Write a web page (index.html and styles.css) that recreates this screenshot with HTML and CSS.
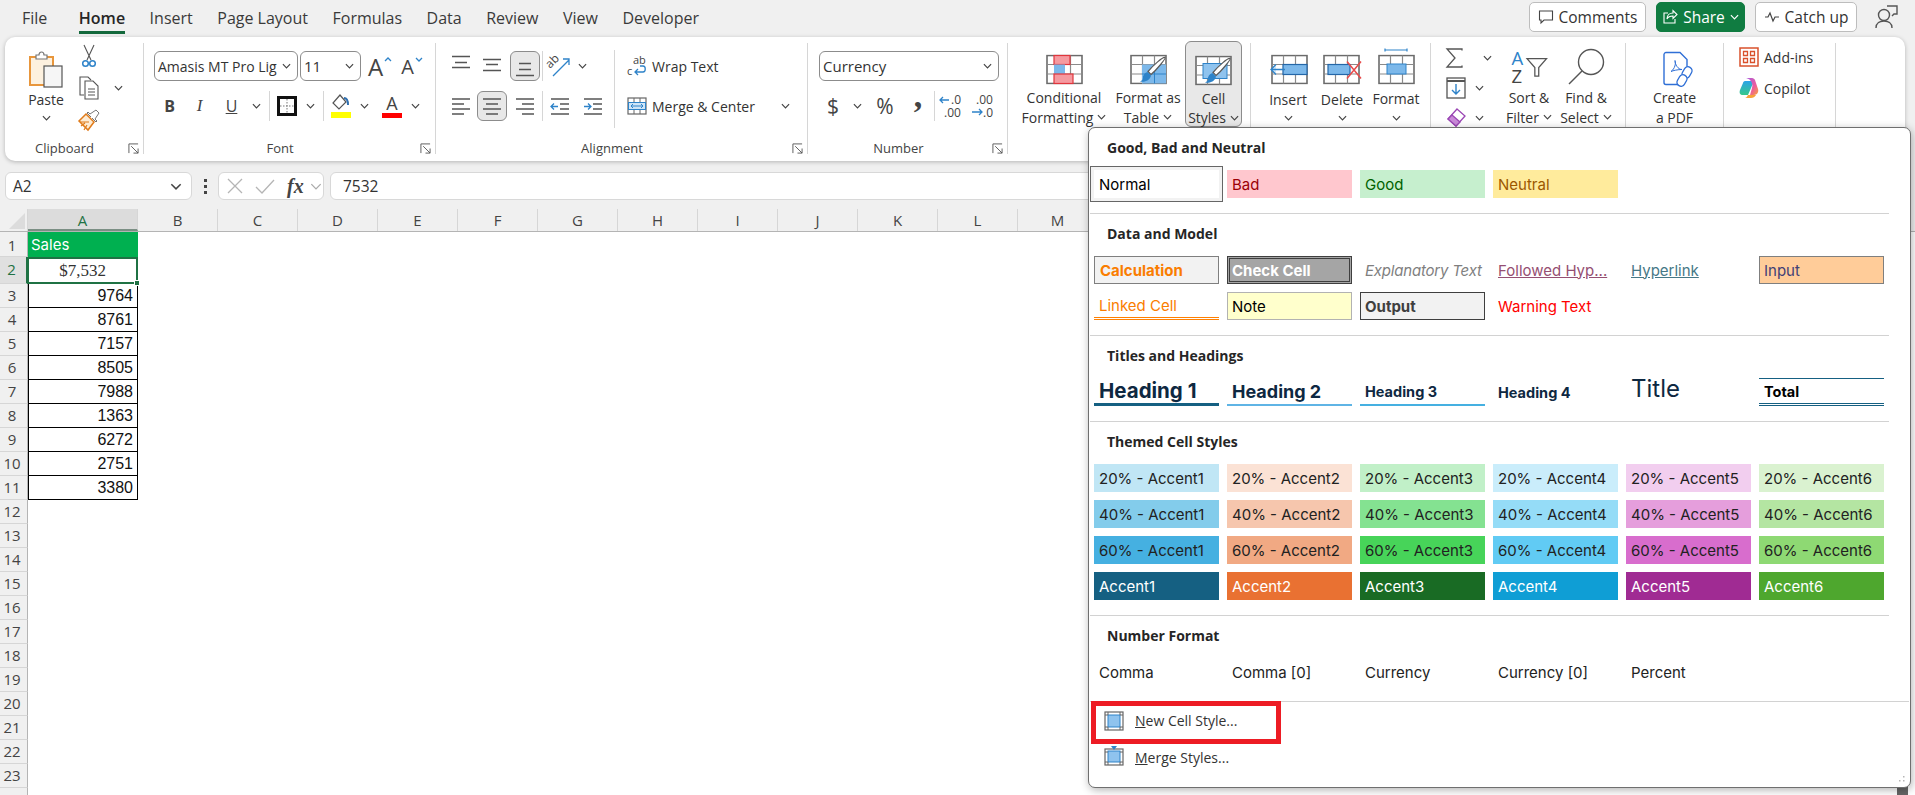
FILE: index.html
```html
<!DOCTYPE html>
<html lang="en">
<head>
    <meta charset="UTF-8">
    <title>Cell Styles</title>
    <link rel="stylesheet" href="styles.css">
</head>
<body>
    <!-- shared icon parts -->
    <svg class="defs" width="0" height="0">
        <defs>
            <symbol id="chev" viewBox="0 0 10 6"><path d="M1 1l4 4 4-4" fill="none" stroke="#444" stroke-width="1.3"/></symbol>
            <symbol id="launch" viewBox="0 0 12 12"><path d="M1 11V1h10M3.5 3.5l7.5 7.5M11 6v5H6" fill="none" stroke="#555" stroke-width="1"/></symbol>
            <symbol id="vtop" viewBox="0 0 20 22"><path d="M1 1.5h18M4 7.5h12M1 12.5h18" stroke="#555" stroke-width="1.4"/></symbol>
            <symbol id="vmid" viewBox="0 0 20 22"><path d="M1 4.5h18M4 9.5h12M1 15.5h18" stroke="#555" stroke-width="1.4"/></symbol>
            <symbol id="vbot" viewBox="0 0 20 22"><path d="M4 8.5h12M4 14.5h12M1 20.5h18" stroke="#555" stroke-width="1.4"/></symbol>
            <symbol id="hleft" viewBox="0 0 20 18"><path d="M1 2h18M1 7h12M1 12h18M1 17h12" stroke="#555" stroke-width="1.4"/></symbol>
            <symbol id="hmid" viewBox="0 0 20 18"><path d="M1 2h18M4 7h12M1 12h18M4 17h12" stroke="#555" stroke-width="1.4"/></symbol>
            <symbol id="hright" viewBox="0 0 20 18"><path d="M1 2h18M7 7h12M1 12h18M7 17h12" stroke="#555" stroke-width="1.4"/></symbol>
            <symbol id="table" viewBox="0 0 37 30">
                <rect x="1" y="1" width="35" height="28" fill="#fff" stroke="#6b6b6b" stroke-width="1.6"/>
                <path d="M12.5 1v28M24.5 1v28M1 10h35M1 19.5h35" stroke="#8a8a8a" stroke-width="1.2"/>
            </symbol>
            <symbol id="brush" viewBox="0 0 37 30">
                <path d="M35 3c1 1-8 12-14 17l-3-3c5-6 15-15 17-14z" fill="#fff" stroke="#5a5a5a" stroke-width="1.2"/>
                <path d="M17.500 17.500l3.500 3.500c-1 5-6 7-11 6 3-1 3-3 3-5 1-3 3-4 4.500-4.500z" fill="#2e83c9"/>
            </symbol>
        </defs>
    </svg>

    <!-- Tabs and top right buttons -->
    <div class="topbar">
        <nav class="tabs">
            <span class="tab tab-file">File</span>
            <span class="tab active">Home</span>
            <span class="tab">Insert</span>
            <span class="tab">Page Layout</span>
            <span class="tab">Formulas</span>
            <span class="tab">Data</span>
            <span class="tab">Review</span>
            <span class="tab">View</span>
            <span class="tab">Developer</span>
        </nav>
        <div class="top-actions">
            <button class="top-btn comments">
                <svg width="16" height="16" viewBox="0 0 16 16"><path d="M1.500 2h13v9H6l-3 3v-3H1.500z" fill="none" stroke="#444" stroke-width="1.100"/></svg>
                Comments
            </button>
            <button class="top-btn share">
                <svg width="16" height="16" viewBox="0 0 16 16"><path d="M6 4H2v10h11v-4M5 10c0-4 3-6 6-6V1.500l4 4-4 4V7c-3 0-5 1-6 3z" fill="none" stroke="#fff" stroke-width="1.100"/></svg>
                Share
                <svg class="chev chev-white" viewBox="0 0 10 6"><path d="M1 1l4 4 4-4" fill="none" stroke="#fff" stroke-width="1.300"/></svg>
            </button>
            <button class="top-btn catchup">
                <svg width="16" height="14" viewBox="0 0 16 14"><path d="M1 7h3l2-4 3 8 2-4h4" fill="none" stroke="#444" stroke-width="1.200"/></svg>
                Catch up
            </button>
            <svg class="person" width="24" height="26" viewBox="0 0 24 26">
                <circle cx="9" cy="11" r="5.500" fill="none" stroke="#555" stroke-width="1.400"/>
                <path d="M1 24c0-5 4-7 8-7s8 2 8 7M12 2h10v8h-3l-2 2" fill="none" stroke="#555" stroke-width="1.400"/>
            </svg>
        </div>
    </div>

    <!-- Ribbon -->
    <div class="ribbon">
        <section class="group g-clipboard">
            <div class="group-body clipboard-body">
                <div class="big big-low paste-btn">
                    <svg class="big-icon" width="36" height="37" viewBox="0 0 36 37">
                        <rect x="2" y="6" width="23" height="28" fill="#fdf1df" stroke="#e8963c" stroke-width="2"/>
                        <path d="M8 8V4h3c0-4 5-4 5 0h3v4z" fill="#fff" stroke="#777" stroke-width="1.200"/>
                        <rect x="16" y="15" width="18" height="21" fill="#f6f6f6" stroke="#555" stroke-width="1.200"/>
                    </svg>
                    <span class="big-text">Paste</span>
                    <svg class="chev big-chev"><use href="#chev"/></svg>
                </div>
                <div class="clip-tools">
                    <div class="clip-row">
                        <svg width="16" height="24" viewBox="0 0 16 24"><path d="M3 1l7 15M13 1L6 16" stroke="#555" stroke-width="1.100"/><circle cx="4.500" cy="19.500" r="2.800" fill="none" stroke="#2e83c9" stroke-width="1.500"/><circle cx="11.500" cy="19.500" r="2.800" fill="none" stroke="#2e83c9" stroke-width="1.500"/></svg>
                    </div>
                    <div class="clip-row">
                        <svg width="20" height="24" viewBox="0 0 20 24"><path d="M5 19H1V1h8l3 3" fill="none" stroke="#555" stroke-width="1.100"/><path d="M6 5h8l5 5v13H6zM9 13h7M9 16h7M9 19h7" fill="#fff" stroke="#555" stroke-width="1.100"/></svg>
                        <svg class="chev"><use href="#chev"/></svg>
                    </div>
                    <div class="clip-row">
                        <svg width="22" height="22" viewBox="0 0 22 22"><path d="M13 8l-4-4 1-1 2 2 6-4 3 3-4 6 2 2-1 1-4-4" fill="#fff" stroke="#777" stroke-width="1"/><path d="M8 5l8 8-6 8-9-9z" fill="#fdebd3" stroke="#e07b1a" stroke-width="1.500"/><path d="M2 13l9 0M6 21l3-5M3 17l4-3" stroke="#e07b1a" stroke-width="1.200"/></svg>
                    </div>
                </div>
            </div>
            <div class="label-row"><span class="group-label">Clipboard</span><svg class="launcher"><use href="#launch"/></svg></div>
        </section>

        <section class="group g-font">
            <div class="group-body rows">
                <div class="row font-row1">
                    <div class="select select-font"><span>Amasis MT Pro Lig</span><svg class="chev"><use href="#chev"/></svg></div>
                    <span></span>
                    <div class="select"><span>11</span><svg class="chev"><use href="#chev"/></svg></div>
                    <span class="tool size-btn big-a">A<svg class="size-caret" width="8" height="5" viewBox="0 0 8 5"><path d="M1 4l3-3 3 3" fill="none" stroke="#2e83c9" stroke-width="1.300"/></svg></span>
                    <span class="tool size-btn small-a">A<svg class="size-caret" width="8" height="5" viewBox="0 0 8 5"><path d="M1 1l3 3 3-3" fill="none" stroke="#2e83c9" stroke-width="1.300"/></svg></span>
                </div>
                <div class="row font-row2">
                    <span class="tool style-b">B</span>
                    <span class="tool style-i">I</span>
                    <span class="tool style-u">U</span>
                    <span class="tool"><svg class="chev"><use href="#chev"/></svg></span>
                    <span class="tool"><i class="vsep"></i></span>
                    <span class="tool">
                        <svg width="20" height="20" viewBox="0 0 20 20"><rect x="1.500" y="1.500" width="17" height="17" fill="#fff" stroke="#111" stroke-width="3"/><path d="M10 3v14M3 10h14" stroke="#777" stroke-width="1" stroke-dasharray="1.500 1.500"/></svg>
                    </span>
                    <span class="tool"><svg class="chev"><use href="#chev"/></svg></span>
                    <span class="tool"><i class="vsep"></i></span>
                    <span class="tool">
                        <svg width="20" height="24" viewBox="0 0 20 24"><path d="M9 1L2 9l6 6 7-7z" fill="#fff" stroke="#555" stroke-width="1.200"/><path d="M13 4c3 0 4 3 4 7" fill="none" stroke="#2e6fb0" stroke-width="2"/><rect y="18" width="20" height="6" fill="#ffff00"/></svg>
                    </span>
                    <span class="tool"><svg class="chev"><use href="#chev"/></svg></span>
                    <span class="tool font-color">A<i class="color-bar"></i></span>
                    <span class="tool"><svg class="chev"><use href="#chev"/></svg></span>
                </div>
            </div>
            <div class="label-row"><span class="group-label">Font</span><svg class="launcher"><use href="#launch"/></svg></div>
        </section>

        <section class="group g-align">
            <div class="group-body align-body">
                <div class="rows align-left">
                    <div class="row align-row1">
                        <span class="tool"><svg class="al-v"><use href="#vtop"/></svg></span>
                        <span class="tool"><svg class="al-v"><use href="#vmid"/></svg></span>
                        <span class="tool"><span class="pressed"><svg class="al-v"><use href="#vbot"/></svg></span></span>
                        <span class="tool"><i class="vsep"></i></span>
                        <span class="tool">
                            <svg width="22" height="24" viewBox="0 0 22 24"><text class="orient" transform="translate(1 15) rotate(-45)">ab</text><path d="M4 22L20 6M14 5h6v6" fill="none" stroke="#2e83c9" stroke-width="1.300"/></svg>
                        </span>
                        <span class="tool"><svg class="chev"><use href="#chev"/></svg></span>
                    </div>
                    <div class="row align-row2">
                        <span class="tool"><svg class="al-h"><use href="#hleft"/></svg></span>
                        <span class="tool"><span class="pressed"><svg class="al-h"><use href="#hmid"/></svg></span></span>
                        <span class="tool"><svg class="al-h"><use href="#hright"/></svg></span>
                        <span class="tool"><i class="vsep"></i></span>
                        <span class="tool">
                            <svg width="20" height="18" viewBox="0 0 20 18"><path d="M1 2h18M10 7h9M10 12h9M1 17h18" stroke="#555" stroke-width="1.300"/><path d="M8 9.500H1M4 6.500l-3 3 3 3" fill="none" stroke="#2e83c9" stroke-width="1.300"/></svg>
                        </span>
                        <span class="tool">
                            <svg width="20" height="18" viewBox="0 0 20 18"><path d="M1 2h18M10 7h9M10 12h9M1 17h18" stroke="#555" stroke-width="1.300"/><path d="M1 9.500h7M5 6.500l3 3-3 3" fill="none" stroke="#2e83c9" stroke-width="1.300"/></svg>
                        </span>
                    </div>
                </div>
                <i class="vsep tall"></i>
                <div class="align-right">
                    <div class="wide-tool">
                        <svg width="20" height="22" viewBox="0 0 20 22"><text class="wrap-text" x="6" y="9">ab</text><text class="wrap-text" x="0" y="20">c</text><path d="M13 11h3c3 0 3 6 0 6H8M11 14l-3 3 3 3" fill="none" stroke="#2e83c9" stroke-width="1.300"/></svg>
                        <span>Wrap Text</span>
                    </div>
                    <div class="wide-tool">
                        <svg width="20" height="18" viewBox="0 0 20 18"><rect x="1" y="1" width="18" height="16" fill="#fff" stroke="#666" stroke-width="1.200"/><path d="M1 5.500h18M1 12.500h18M7 1v4M13 1v4M7 13v4M13 13v4" stroke="#666"/><rect x="1.500" y="5.500" width="17" height="7" fill="#cfe5f7" stroke="#2e83c9"/><path d="M4 9h12M6 7L4 9l2 2M14 7l2 2-2 2" fill="none" stroke="#2e83c9"/></svg>
                        <span>Merge &amp; Center</span>
                        <svg class="chev merge-chev"><use href="#chev"/></svg>
                    </div>
                </div>
            </div>
            <div class="label-row"><span class="group-label">Alignment</span><svg class="launcher"><use href="#launch"/></svg></div>
        </section>

        <section class="group g-number">
            <div class="group-body rows">
                <div class="row">
                    <div class="select select-full"><span>Currency</span><svg class="chev"><use href="#chev"/></svg></div>
                </div>
                <div class="row number-row2">
                    <span class="tool num-sign">$</span>
                    <span class="tool"><svg class="chev"><use href="#chev"/></svg></span>
                    <span class="tool num-sign">%</span>
                    <span class="tool num-comma">,</span>
                    <span class="tool"><i class="vsep"></i></span>
                    <span class="tool">
                        <svg width="24" height="26" viewBox="0 0 24 26"><text class="dec-text" x="12" y="11">.0</text><text class="dec-text" x="5" y="24">.00</text><path d="M10 7H1M4 4L1 7l3 3" fill="none" stroke="#2e83c9" stroke-width="1.300"/></svg>
                    </span>
                    <span class="tool">
                        <svg width="24" height="26" viewBox="0 0 24 26"><text class="dec-text" x="5" y="11">.00</text><text class="dec-text" x="12" y="24">.0</text><path d="M1 19h10M8 16l3 3-3 3" fill="none" stroke="#2e83c9" stroke-width="1.300"/></svg>
                    </span>
                </div>
            </div>
            <div class="label-row"><span class="group-label">Number</span><svg class="launcher"><use href="#launch"/></svg></div>
        </section>

        <section class="group g-styles">
            <div class="group-body big-row styles-body">
                <div class="big b-cond">
                    <svg class="big-icon" width="37" height="30" viewBox="0 0 37 30">
                        <use href="#table" width="37" height="30"/>
                        <rect x="8" y="1" width="16" height="9" fill="#f59aa0" stroke="#e0363c" stroke-width="1.200"/>
                        <rect x="8" y="10" width="11" height="9.500" fill="#7cb8ea"/>
                        <rect x="8" y="19.500" width="19" height="9.500" fill="#f59aa0" stroke="#e0363c" stroke-width="1.200"/>
                    </svg>
                    <span class="big-text">Conditional</span>
                    <span class="big-text">Formatting <svg class="chev"><use href="#chev"/></svg></span>
                </div>
                <div class="big b-table">
                    <svg class="big-icon" width="37" height="30" viewBox="0 0 37 30">
                        <use href="#table" width="37" height="30"/>
                        <rect x="12" y="10" width="24" height="19" fill="#7cb8ea"/>
                        <path d="M24.500 10v19M12 19.500h24" stroke="#2e83c9" stroke-width="1"/>
                        <use href="#brush" width="37" height="30"/>
                    </svg>
                    <span class="big-text">Format as</span>
                    <span class="big-text">Table <svg class="chev"><use href="#chev"/></svg></span>
                </div>
                <div class="big b-cell open">
                    <svg class="big-icon" width="37" height="30" viewBox="0 0 37 30">
                        <use href="#table" width="37" height="30"/>
                        <rect x="8" y="8" width="24" height="15" fill="#8fc3ee" stroke="#2e83c9" stroke-width="1"/>
                        <use href="#brush" width="37" height="30"/>
                    </svg>
                    <span class="big-text">Cell</span>
                    <span class="big-text">Styles <svg class="chev"><use href="#chev"/></svg></span>
                </div>
            </div>
        </section>

        <section class="group g-cells">
            <div class="group-body big-row cells-body">
                <div class="big big-low b-cellop">
                    <svg class="big-icon" width="39" height="30" viewBox="0 0 39 30">
                        <g transform="translate(2 0)"><use href="#table" width="37" height="30"/></g>
                        <rect x="14" y="10" width="24" height="10" fill="#7cb8ea" stroke="#2467a8" stroke-width="1.200"/>
                        <path d="M16 15H2M7 10l-5 5 5 5" fill="#cfe5f7" stroke="#2e83c9" stroke-width="1.300"/>
                    </svg>
                    <span class="big-text">Insert</span>
                    <svg class="chev big-chev"><use href="#chev"/></svg>
                </div>
                <div class="big big-low b-cellop">
                    <svg class="big-icon" width="39" height="30" viewBox="0 0 39 30">
                        <use href="#table" width="37" height="30"/>
                        <rect x="5" y="10" width="22" height="10" fill="#7cb8ea" stroke="#2467a8" stroke-width="1.200"/>
                        <path d="M24 7l14 17M38 7L24 24" stroke="#e84a4a" stroke-width="1.500"/>
                    </svg>
                    <span class="big-text">Delete</span>
                    <svg class="chev big-chev"><use href="#chev"/></svg>
                </div>
                <div class="big b-cellop">
                    <svg class="big-icon icon-raised" width="37" height="36" viewBox="0 0 37 36">
                        <path d="M7 1.500h22M7 0v3M29 0v3" stroke="#2e83c9" stroke-width="1.200"/>
                        <g transform="translate(0 6)"><use href="#table" width="37" height="30"/></g>
                        <rect x="9" y="15.500" width="19" height="10" fill="#7cb8ea" stroke="#2e83c9" stroke-width="1"/>
                    </svg>
                    <span class="big-text">Format</span>
                    <svg class="chev big-chev"><use href="#chev"/></svg>
                </div>
            </div>
        </section>

        <section class="group g-editing">
            <div class="group-body big-row">
                <div class="edit-tools">
                    <div class="edit-row">
                        <svg width="17" height="20" viewBox="0 0 17 20"><path d="M16 2.500V1H1l8 9-8 9h15v-1.500" fill="none" stroke="#555" stroke-width="1.300"/></svg>
                        <svg class="chev sum-chev"><use href="#chev"/></svg>
                    </div>
                    <div class="edit-row">
                        <svg width="20" height="22" viewBox="0 0 20 22"><rect x="1" y="1" width="18" height="20" fill="#fff" stroke="#555" stroke-width="1.300"/><path d="M1 4h18" stroke="#555" stroke-width="2"/><path d="M10 7v10M6 13l4 4 4-4" fill="none" stroke="#2e83c9" stroke-width="1.400"/></svg>
                        <svg class="chev"><use href="#chev"/></svg>
                    </div>
                    <div class="edit-row">
                        <svg width="20" height="20" viewBox="0 0 20 20"><path d="M11 1l8 7-9 10-8-7z" fill="#fff" stroke="#9a46b4" stroke-width="1.300"/><path d="M6 7l8 7-4 4-8-7z" fill="#c98ad8" stroke="#9a46b4" stroke-width="1.300"/></svg>
                        <svg class="chev"><use href="#chev"/></svg>
                    </div>
                </div>
                <div class="big b-sort">
                    <svg class="big-icon sort-icon" width="38" height="38" viewBox="0 0 38 38">
                        <text class="sort-a" x="1" y="17">A</text>
                        <text class="sort-z" x="1" y="36">Z</text>
                        <path d="M17 11h20l-8 9v9h-4v-9z" fill="#fff" stroke="#555" stroke-width="1.300"/>
                    </svg>
                    <span class="big-text">Sort &amp;</span>
                    <span class="big-text">Filter <svg class="chev"><use href="#chev"/></svg></span>
                </div>
                <div class="big b-find">
                    <svg class="big-icon sort-icon" width="36" height="37" viewBox="0 0 36 37">
                        <circle cx="23" cy="14" r="12.500" fill="#fff" stroke="#555" stroke-width="1.400"/>
                        <path d="M14 23L1 36" stroke="#555" stroke-width="1.400"/>
                    </svg>
                    <span class="big-text">Find &amp;</span>
                    <span class="big-text">Select <svg class="chev"><use href="#chev"/></svg></span>
                </div>
            </div>
        </section>

        <section class="group g-pdf">
            <div class="group-body big-row">
                <div class="big b-pdf">
                    <svg class="big-icon pdf-icon" width="32" height="36" viewBox="0 0 32 36">
                        <path d="M3 1h14l7 7v16M3 1C2 1 1 2 1 3v28c0 1 1 2 2 2h13" fill="#fff" stroke="#2f6fd6" stroke-width="1.400"/>
                        <path d="M8 20c4-3 5-8 4-11 0 4 3 9 7 9-4 0-9 1-11 2z" fill="none" stroke="#2f6fd6" stroke-width="1"/>
                        <rect x="20" y="15" width="8" height="12" rx="4" transform="rotate(30 24 21)" fill="#fff" stroke="#2f6fd6" stroke-width="1.400"/>
                        <rect x="15" y="23" width="8" height="12" rx="4" transform="rotate(30 19 29)" fill="#fff" stroke="#2f6fd6" stroke-width="1.400"/>
                    </svg>
                    <span class="big-text">Create</span>
                    <span class="big-text">a PDF</span>
                </div>
            </div>
        </section>

        <section class="group g-addins">
            <div class="group-body addins-body">
                <div class="wide-tool">
                    <svg width="20" height="20" viewBox="0 0 20 20"><rect x="1" y="1" width="18" height="18" fill="none" stroke="#d9512c" stroke-width="1.500"/><path d="M4.500 4.500h4v4h-4zM11.500 4.500h4v4h-4zM4.500 11.500h4v4h-4zM11.500 11.500h4v4h-4z" fill="none" stroke="#d9512c" stroke-width="1.300"/></svg>
                    <span>Add-ins</span>
                </div>
                <div class="wide-tool">
                    <svg width="20" height="22" viewBox="0 0 20 22">
                        <defs>
                            <linearGradient id="copA" x1="0" y1="0" x2="0" y2="1"><stop offset="0" stop-color="#2aa3e8"/><stop offset="1" stop-color="#37c98a"/></linearGradient>
                            <linearGradient id="copB" x1="0" y1="0" x2="1" y2="1"><stop offset="0" stop-color="#a75be0"/><stop offset="0.600" stop-color="#ec5c9c"/><stop offset="1" stop-color="#f7a33a"/></linearGradient>
                        </defs>
                        <path d="M6 4h9l-3 7-3 7H4c-3 0-4-2-3-5l3-7c0-1 1-2 2-2z" fill="url(#copA)"/>
                        <path d="M7 1h6c1.500 0 2.500 1 3 2l3 9c1 3-1 6-4 6h-4l2-7c1-3 0-6-2-8-1-1-3-2-4-2z" fill="url(#copB)"/>
                        <path d="M6 21h6c2 0 4-1 5-3H9c-1 2-2 3-3 3z" fill="#f7a33a"/>
                    </svg>
                    <span>Copilot</span>
                </div>
            </div>
        </section>
    </div>

    <!-- Formula bar -->
    <div class="formula-bar">
        <div class="name-box"><span>A2</span><svg class="chev name-chev"><use href="#chev"/></svg></div>
        <div class="fb-dots"><i></i><i></i><i></i></div>
        <div class="fx-box">
            <svg width="16" height="16" viewBox="0 0 16 16"><path d="M1 1l14 14M15 1L1 15" stroke="#b5b5b5" stroke-width="1.300"/></svg>
            <svg width="20" height="15" viewBox="0 0 20 15"><path d="M1 8l6 6L19 1" fill="none" stroke="#b5b5b5" stroke-width="1.300"/></svg>
            <span class="fx">fx</span>
            <svg class="chev fx-chev" viewBox="0 0 10 6"><path d="M1 1l4 4 4-4" fill="none" stroke="#aaa" stroke-width="1.100"/></svg>
        </div>
        <div class="formula-input">7532</div>
    </div>

    <!-- Sheet -->
    <div class="sheet">
        <div class="col-heads">
            <div class="corner"><i></i></div>
            <div class="col-head col-a active">A</div>
            <div class="col-head">B</div>
            <div class="col-head">C</div>
            <div class="col-head">D</div>
            <div class="col-head">E</div>
            <div class="col-head">F</div>
            <div class="col-head">G</div>
            <div class="col-head">H</div>
            <div class="col-head">I</div>
            <div class="col-head">J</div>
            <div class="col-head">K</div>
            <div class="col-head">L</div>
            <div class="col-head">M</div>
        </div>
        <div class="sheet-row row-1"><div class="row-head">1</div><div class="cell cell-head">Sales</div></div>
        <div class="sheet-row row-2"><div class="row-head active">2</div><div class="cell cell-active">$7,532<i class="fill-handle"></i></div></div>
        <div class="sheet-row"><div class="row-head">3</div><div class="cell cell-num">9764</div></div>
        <div class="sheet-row"><div class="row-head">4</div><div class="cell cell-num">8761</div></div>
        <div class="sheet-row"><div class="row-head">5</div><div class="cell cell-num">7157</div></div>
        <div class="sheet-row"><div class="row-head">6</div><div class="cell cell-num">8505</div></div>
        <div class="sheet-row"><div class="row-head">7</div><div class="cell cell-num">7988</div></div>
        <div class="sheet-row"><div class="row-head">8</div><div class="cell cell-num">1363</div></div>
        <div class="sheet-row"><div class="row-head">9</div><div class="cell cell-num">6272</div></div>
        <div class="sheet-row"><div class="row-head">10</div><div class="cell cell-num">2751</div></div>
        <div class="sheet-row"><div class="row-head">11</div><div class="cell cell-num">3380</div></div>
        <div class="sheet-row"><div class="row-head">12</div></div>
        <div class="sheet-row"><div class="row-head">13</div></div>
        <div class="sheet-row"><div class="row-head">14</div></div>
        <div class="sheet-row"><div class="row-head">15</div></div>
        <div class="sheet-row"><div class="row-head">16</div></div>
        <div class="sheet-row"><div class="row-head">17</div></div>
        <div class="sheet-row"><div class="row-head">18</div></div>
        <div class="sheet-row"><div class="row-head">19</div></div>
        <div class="sheet-row"><div class="row-head">20</div></div>
        <div class="sheet-row"><div class="row-head">21</div></div>
        <div class="sheet-row"><div class="row-head">22</div></div>
        <div class="sheet-row"><div class="row-head">23</div></div>
        <div class="sheet-row"><div class="row-head">24</div></div>
    </div>

    <i class="scroll-thumb"></i>

    <!-- Cell Styles dropdown -->
    <div class="popup">
        <div class="section">
            <h4>Good, Bad and Neutral</h4>
            <div class="style-grid">
                <div class="st st-normal">Normal</div>
                <div class="st st-bad">Bad</div>
                <div class="st st-good">Good</div>
                <div class="st st-neutral">Neutral</div>
            </div>
        </div>
        <div class="section">
            <h4>Data and Model</h4>
            <div class="style-grid">
                <div class="st st-calc">Calculation</div>
                <div class="st st-check">Check Cell</div>
                <div class="st st-expl">Explanatory Text</div>
                <div class="st st-followed">Followed Hyp...</div>
                <div class="st st-link">Hyperlink</div>
                <div class="st st-input">Input</div>
                <div class="st st-linked">Linked Cell</div>
                <div class="st st-note">Note</div>
                <div class="st st-output">Output</div>
                <div class="st st-warn">Warning Text</div>
            </div>
        </div>
        <div class="section">
            <h4>Titles and Headings</h4>
            <div class="style-grid">
                <div class="st st-h1">Heading 1</div>
                <div class="st st-h2">Heading 2</div>
                <div class="st st-h3">Heading 3</div>
                <div class="st st-h4">Heading 4</div>
                <div class="st st-title">Title</div>
                <div class="st st-total">Total</div>
            </div>
        </div>
        <div class="section">
            <h4>Themed Cell Styles</h4>
            <div class="style-grid">
                <div class="st a1-20">20% - Accent1</div>
                <div class="st a2-20">20% - Accent2</div>
                <div class="st a3-20">20% - Accent3</div>
                <div class="st a4-20">20% - Accent4</div>
                <div class="st a5-20">20% - Accent5</div>
                <div class="st a6-20">20% - Accent6</div>
                <div class="st a1-40">40% - Accent1</div>
                <div class="st a2-40">40% - Accent2</div>
                <div class="st a3-40">40% - Accent3</div>
                <div class="st a4-40">40% - Accent4</div>
                <div class="st a5-40">40% - Accent5</div>
                <div class="st a6-40">40% - Accent6</div>
                <div class="st a1-60">60% - Accent1</div>
                <div class="st a2-60">60% - Accent2</div>
                <div class="st a3-60">60% - Accent3</div>
                <div class="st a4-60">60% - Accent4</div>
                <div class="st a5-60">60% - Accent5</div>
                <div class="st a6-60">60% - Accent6</div>
                <div class="st a1-full">Accent1</div>
                <div class="st a2-full">Accent2</div>
                <div class="st a3-full">Accent3</div>
                <div class="st a4-full">Accent4</div>
                <div class="st a5-full">Accent5</div>
                <div class="st a6-full">Accent6</div>
            </div>
        </div>
        <div class="section section-wide">
            <h4>Number Format</h4>
            <div class="style-grid">
                <div class="st">Comma</div>
                <div class="st">Comma [0]</div>
                <div class="st">Currency</div>
                <div class="st">Currency [0]</div>
                <div class="st">Percent</div>
            </div>
        </div>
        <div class="menu-item">
            <svg width="20" height="20" viewBox="0 0 20 20"><rect x="1" y="1" width="18" height="18" fill="#fff" stroke="#666" stroke-width="1.200"/><rect x="4" y="4" width="12" height="12" fill="#8fc3ee" stroke="#2e83c9"/><path d="M1 4h3M16 4h3M1 16h3M16 16h3M4 1v3M16 1v3M4 16v3M16 16v3" stroke="#666"/></svg>
            <span><u>N</u>ew Cell Style...</span>
        </div>
        <div class="menu-item">
            <svg class="merge-icon" width="20" height="20" viewBox="0 0 20 20"><rect x="1" y="3" width="18" height="16" fill="#fff" stroke="#666" stroke-width="1.200"/><rect x="4" y="5" width="12" height="11" fill="#8fc3ee" stroke="#2e83c9"/><path d="M1 6h3M16 6h3M1 16h3M16 16h3M4 16v3M16 16v3" stroke="#666"/><path d="M7 0h6l-3 4z" fill="#2e83c9"/></svg>
            <span><u>M</u>erge Styles...</span>
        </div>
        <div class="red-box"></div>
        <svg class="grip" width="8" height="6" viewBox="0 0 8 6"><path d="M6 0h1.500v1.500H6zM2 4h1.500v1.500H2zM6 4h1.500v1.500H6z" fill="#b5b5b5"/></svg>
    </div>
</body>
</html>
```

FILE: styles.css
```css
* {
    box-sizing: border-box;
}
html, body {
    margin: 0;
    padding: 0;
}
body {
    position: relative;
    width: 1915px;
    height: 795px;
    overflow: hidden;
    background-color: #f0f0f0;
    font-family: "Open Sans", "Noto Sans", sans-serif;
    font-size: 14px;
    color: #333;
}
button {
    font-family: inherit;
}
i {
    font-style: normal;
}
.defs {
    position: absolute;
}
svg {
    display: block;
    flex: none;
    overflow: visible;
}
.chev {
    width: 9px;
    height: 6px;
}

/* top bar */
.topbar {
    display: flex;
    height: 37px;
    align-items: flex-start;
}
.tabs {
    display: flex;
    gap: 24.5px;
    padding-left: 22px;
}
.tab {
    height: 34px;
    line-height: 36px;
    font-size: 16px;
    color: #3a3a3a;
    border-bottom: 3px solid transparent;
}
.tab-file {
    margin-right: 7px;
}
.tab.active {
    font-weight: 600;
    color: #262626;
    border-bottom-color: #14693c;
}
.top-actions {
    display: flex;
    align-items: center;
    gap: 10px;
    margin-left: auto;
    padding-top: 2px;
}
.top-btn {
    display: flex;
    align-items: center;
    justify-content: center;
    gap: 5px;
    height: 30px;
    padding: 0;
    font-size: 15.5px;
    color: #333;
    background-color: #fff;
    border: 1px solid #bdbdbd;
    border-radius: 5px;
}
.comments {
    width: 117px;
}
.share {
    width: 89px;
    color: #fff;
    background-color: #107c41;
    border-color: #107c41;
}
.catchup {
    width: 102px;
}
.person {
    margin: 0 16px 0 8px;
}

/* ribbon */
.ribbon {
    display: flex;
    height: 124px;
    margin: 0 10px 0 5px;
    padding-top: 6px;
    background-color: #fff;
    border-radius: 10px;
    box-shadow: 0 1px 4px rgba(0, 0, 0, 0.25);
}
.group {
    display: flex;
    flex-direction: column;
    height: 111px;
    border-right: 1px solid #d6d6d6;
}
.g-clipboard { width: 139px; }
.g-font { width: 292px; padding-left: 10px; }
.g-align { width: 372px; padding-left: 10px; }
.g-number { width: 200px; padding-left: 11px; }
.g-styles { width: 243px; padding-left: 16px; }
.g-cells { width: 180px; padding-left: 10px; }
.g-editing { width: 195px; padding-left: 7px; }
.g-pdf { width: 98px; }
.g-addins { width: 112px; padding-left: 15px; }

.group-body {
    flex: none;
    height: 97px;
}
.label-row {
    flex: none;
    display: flex;
    align-items: center;
    height: 16px;
    padding-right: 3px;
}
.group-label {
    flex: 1;
    text-align: center;
    font-size: 13px;
    color: #444;
}
.launcher {
    width: 11px;
    height: 11px;
    margin-left: 4px;
    margin-right: 1px;
}
.g-font .label-row, .g-align .label-row, .g-number .label-row {
    margin-left: -10px;
}
.rows {
    display: flex;
    flex-direction: column;
    gap: 10px;
    padding-top: 8px;
}
.row {
    display: grid;
    height: 30px;
    align-items: center;
}
.tool {
    display: flex;
    align-items: center;
    justify-content: center;
    height: 30px;
    min-width: 0;
}
.vsep {
    display: block;
    width: 1px;
    height: 30px;
    background-color: #d6d6d6;
}
.vsep.tall {
    height: 78px;
    margin-top: 7px;
}
.select {
    display: flex;
    align-items: center;
    justify-content: space-between;
    height: 30px;
    padding: 0 6px 0 3px;
    font-size: 15px;
    white-space: nowrap;
    overflow: hidden;
    background-color: #fff;
    border: 1px solid #8c8c8c;
    border-radius: 6px;
}
.select-font {
    font-size: 14px;
}
.select-full {
    width: 180px;
}
.pressed {
    display: flex;
    align-items: center;
    justify-content: center;
    width: 30px;
    height: 30px;
    background-color: #e8e8e8;
    border: 1px solid #8c8c8c;
    border-radius: 6px;
}

/* clipboard */
.clipboard-body {
    display: flex;
    padding-left: 16px;
}
.paste-btn {
    width: 50px;
}
.clip-tools {
    display: flex;
    flex-direction: column;
    gap: 6px;
}
.clip-row {
    position: relative;
    display: flex;
    align-items: center;
    justify-content: center;
    width: 36px;
    height: 26px;
}
.clip-row .chev {
    position: absolute;
    left: 43px;
    top: 10px;
}

/* font */
.font-row1 {
    grid-template-columns: 144px 2px 61px 38px 26px;
}
.font-row2 {
    grid-template-columns: 29px 31px 33px 16px 10px 26px 20px 6px 30px 16px 40px 6px;
    margin-left: 1px;
}
.size-btn {
    gap: 1px;
    align-items: center;
    color: #444;
}
.big-a {
    font-size: 24px;
}
.small-a {
    font-size: 20px;
}
.size-caret {
    margin-bottom: 14px;
}
.style-b {
    font-size: 16px;
    font-weight: 700;
    color: #444;
}
.style-i {
    font-size: 17px;
    font-style: italic;
    font-family: "Liberation Serif", serif;
    color: #444;
}
.style-u {
    font-size: 16px;
    text-decoration: underline;
    color: #444;
}
.font-color {
    flex-direction: column;
    font-size: 18px;
    line-height: 19px;
    color: #444;
}
.color-bar {
    display: block;
    width: 20px;
    height: 5px;
    margin-top: 0;
    background-color: #ff0000;
}

/* alignment */
.align-body {
    display: flex;
}
.align-left {
    width: 168px;
}
.align-row1 {
    grid-template-columns: 30px 32px 34px 1px 34px 10px;
}
.align-row2 {
    grid-template-columns: 30px 32px 34px 1px 34px 32px;
}
.al-v {
    width: 20px;
    height: 22px;
}
.al-h {
    width: 20px;
    height: 18px;
}
.orient {
    font-size: 12px;
    fill: #444;
}
.wrap-text {
    font-size: 11px;
    fill: #444;
}
.align-right {
    display: flex;
    flex-direction: column;
    gap: 10px;
    padding-top: 8px;
    padding-left: 12px;
}
.wide-tool {
    display: flex;
    align-items: center;
    gap: 5px;
    height: 30px;
    font-size: 14px;
    white-space: nowrap;
}
.merge-chev {
    margin-left: 21px;
}

/* number */
.number-row2 {
    grid-template-columns: 28px 20px 36px 30px 3px 30px 34px;
}
.num-sign {
    font-size: 21px;
    color: #444;
}
.num-comma {
    font-size: 34px;
    font-weight: 700;
    line-height: 20px;
    padding-bottom: 20px;
    font-family: "Liberation Serif", serif;
    color: #444;
}
.dec-text {
    font-size: 12px;
    fill: #444;
}

/* big buttons */
.big-row {
    display: flex;
}
.big {
    display: flex;
    flex-direction: column;
    align-items: center;
    height: 86px;
    margin-top: -2px;
    padding-top: 10px;
}
.big-icon {
    height: 37px;
    flex: none;
}
.icon-raised {
    margin-top: -3px;
    margin-bottom: 3px;
}
.big-text {
    display: flex;
    align-items: center;
    gap: 4px;
    height: 20px;
    font-size: 14px;
    white-space: nowrap;
    color: #333;
}
.big-chev {
    margin-top: 7px;
}
.big-low .big-text {
    margin-top: 1px;
    margin-bottom: -1px;
}
.b-cond {
    width: 80px;
}
.b-table {
    width: 72px;
    margin-left: 8px;
}
.b-cell {
    width: 57px;
    margin-left: 1px;
}
.open {
    background-color: #e8e8e8;
    border: 1px solid #8c8c8c;
    border-radius: 6px;
}
.b-cellop {
    width: 54px;
}
.edit-tools {
    display: flex;
    flex-direction: column;
    gap: 4px;
    width: 63px;
    padding-top: 2px;
}
.edit-row {
    display: flex;
    align-items: center;
    gap: 9px;
    height: 26px;
    padding-left: 8px;
}
.sum-chev {
    margin-left: 11px;
}
.b-sort {
    width: 56px;
}
.b-find {
    width: 58px;
}
.sort-icon {
    margin-top: -3px;
    margin-bottom: 3px;
}
.sort-a {
    font-size: 19px;
    fill: #2e83c9;
}
.sort-z {
    font-size: 19px;
    fill: #444;
}
.b-pdf {
    width: 97px;
}
.pdf-icon {
    margin-left: 8px;
}
.addins-body {
    display: flex;
    flex-direction: column;
    gap: 1px;
    margin-top: -1px;
}

/* formula bar */
.formula-bar {
    display: flex;
    align-items: center;
    height: 48px;
    padding: 11px 10px 9px 5px;
}
.name-box {
    display: flex;
    align-items: center;
    justify-content: space-between;
    width: 187px;
    height: 28px;
    padding: 0 9px 0 7px;
    font-size: 15.5px;
    background-color: #fff;
    border: 1px solid #d8d8d8;
    border-radius: 6px;
}
.name-chev {
    width: 12px;
    height: 7px;
}
.fb-dots {
    display: flex;
    flex-direction: column;
    align-items: center;
    gap: 3px;
    width: 26px;
}
.fb-dots i {
    display: block;
    width: 3px;
    height: 3px;
    background-color: #444;
}
.fx-box {
    display: flex;
    align-items: center;
    gap: 12px;
    width: 106px;
    height: 28px;
    padding-left: 8px;
    background-color: #fff;
    border: 1px solid #d8d8d8;
    border-radius: 6px;
}
.fx {
    font-family: "Liberation Serif", serif;
    font-style: italic;
    font-weight: 700;
    font-size: 20px;
    color: #444;
}
.fx-chev {
    width: 12px;
    height: 7px;
    margin-left: -6px;
}
.formula-input {
    flex: 1;
    height: 28px;
    margin-left: 6px;
    padding-left: 12px;
    font-size: 15.5px;
    line-height: 26px;
    background-color: #fff;
    border: 1px solid #d8d8d8;
    border-radius: 6px;
}

/* sheet */
.sheet {
    display: flex;
    flex-direction: column;
}
.col-heads {
    display: flex;
    height: 23px;
    background-color: #f0f0f0;
    border-bottom: 1px solid #b4b4b4;
}
.corner {
    width: 28px;
    border-right: 1px solid #d6d6d6;
}
.corner i {
    display: block;
    width: 16px;
    height: 16px;
    margin: 4px 0 0 9px;
    background-color: #dcdcdc;
    clip-path: polygon(100% 0, 100% 100%, 0 100%);
}
.col-head {
    width: 80px;
    text-align: center;
    font-size: 15px;
    line-height: 22px;
    color: #444;
    border-right: 1px solid #d6d6d6;
}
.col-a {
    width: 110px;
}
.col-head.active {
    color: #1f7244;
    background-color: #dcdcdc;
    border-bottom: 2px solid #7b8f84;
}
.sheet-row {
    display: flex;
    height: 24px;
    background-color: #fff;
}
.row-1 {
    height: 25px;
}
.row-2 {
    height: 27px;
}
.row-head {
    width: 28px;
    padding-right: 3px;
    text-align: center;
    font-size: 15px;
    line-height: 23px;
    color: #444;
    background-color: #f0f0f0;
    border-right: 1px solid #b4b4b4;
    border-bottom: 1px solid #d6d6d6;
}
.row-head.active {
    color: #1f7244;
    background-color: #e0e0e0;
    border-right: 2px solid #1f7244;
}
.row-1 .row-head {
    line-height: 26px;
}
.row-2 .row-head {
    line-height: 24px;
}
.cell {
    width: 110px;
    padding: 0 4px;
    border-right: 1px solid #000;
    border-bottom: 1px solid #000;
}
.cell-head {
    padding-left: 3px;
    font-family: "Inter", sans-serif;
    font-size: 15px;
    line-height: 26px;
    color: #fff;
    background-color: #00b050;
    border-right-color: #00b050;
    border-bottom: none;
}
.cell-active {
    position: relative;
    width: 111px;
    margin-left: -1px;
    text-align: center;
    font-family: "Liberation Serif", serif;
    font-size: 17px;
    line-height: 24px;
    border: 2px solid #1f7244;
}
.fill-handle {
    position: absolute;
    right: -4px;
    bottom: -4px;
    width: 6px;
    height: 6px;
    background-color: #1f7244;
    border: 1px solid #fff;
}
.cell-num {
    text-align: right;
    font-family: "Liberation Sans", sans-serif;
    font-size: 16px;
    line-height: 24px;
    color: #111;
    border-left: 1px solid #000;
}
.scroll-thumb {
    position: absolute;
    left: 1897px;
    top: 785px;
    width: 11px;
    height: 10px;
    background-color: #666;
}

/* dropdown */
.popup {
    position: absolute;
    left: 1088px;
    top: 127px;
    width: 823px;
    height: 661px;
    background-color: #fff;
    border: 1px solid #6f6f6f;
    border-radius: 7px;
    box-shadow: 1px 2px 8px rgba(0, 0, 0, 0.3);
}
.section {
    margin: 0 21px 0 1px;
    padding: 10px 0 15px;
    border-bottom: 1px solid #d2d2d2;
}
.section-wide {
    margin-right: 1px;
}
.section h4 {
    margin: 0 0 12px;
    padding-left: 17px;
    font-size: 14px;
    font-weight: 700;
    line-height: 20px;
    color: #262626;
}
.style-grid {
    display: grid;
    grid-template-columns: repeat(6, 125px);
    grid-auto-rows: 28px;
    gap: 8px;
    padding-left: 4px;
}
.st {
    display: flex;
    align-items: center;
    padding: 0 5px;
    font-family: "Inter", sans-serif;
    font-size: 15px;
    white-space: nowrap;
    color: #222;
}
.st-normal {
    box-shadow: 0 0 0 3px #f2f2f2, 0 0 0 4px #666;
    background-color: #fff;
    color: #000;
}
.st-bad { background-color: #ffc7ce; color: #9c0006; }
.st-good { background-color: #c6efce; color: #006100; }
.st-neutral { background-color: #ffeb9c; color: #9c5700; }
.st-calc {
    font-weight: 700;
    color: #fa7d00;
    background-color: #f2f2f2;
    border: 1px solid #7f7f7f;
}
.st-check {
    padding-left: 2px;
    font-weight: 700;
    color: #fff;
    background-color: #a5a5a5;
    border: 3px double #3f3f3f;
}
.st-expl { font-style: italic; color: #7f7f7f; letter-spacing: -0.2px; }
.st-followed { color: #954f72; text-decoration: underline; }
.st-link { color: #467886; text-decoration: underline; }
.st-input {
    padding-left: 4px;
    color: #3f3f76;
    background-color: #ffcc99;
    border: 1px solid #7f7f7f;
}
.st-linked {
    padding-top: 1px;
    color: #fa7d00;
    border-bottom: 3px double #ff8001;
}
.st-note {
    padding-left: 4px;
    color: #000;
    background-color: #ffffcc;
    border: 1px solid #b2b2b2;
}
.st-output {
    padding-left: 4px;
    font-weight: 700;
    color: #3f3f3f;
    background-color: #f2f2f2;
    border: 1px solid #3f3f3f;
}
.st-warn { color: #ff0000; }
.st-h1, .st-h2, .st-h3, .st-h4, .st-title {
    font-weight: 700;
    color: #0e2841;
}
.st-h1 { font-size: 20.5px; border-bottom: 3px solid #156082; }
.st-h2 { font-size: 18px; border-bottom: 2px solid #5fb4e5; }
.st-h3 { font-size: 14.5px; border-bottom: 2px solid #45b0e1; }
.st-h4 { font-size: 14.5px; }
.st-title { font-size: 24px; font-weight: 400; padding-bottom: 8px; }
.st-total {
    padding-top: 1px;
    font-weight: 700;
    font-size: 14.5px;
    color: #000;
    border-top: 1px solid #156082;
    border-bottom: 3px double #156082;
}
.a1-20 { background-color: #c0e6f5; }
.a2-20 { background-color: #fbe2d5; }
.a3-20 { background-color: #c1f0c8; }
.a4-20 { background-color: #caedfb; }
.a5-20 { background-color: #f2ceef; }
.a6-20 { background-color: #daf2d0; }
.a1-40 { background-color: #83cceb; }
.a2-40 { background-color: #f6c6ad; }
.a3-40 { background-color: #84e291; }
.a4-40 { background-color: #95dcf7; }
.a5-40 { background-color: #e59edc; }
.a6-40 { background-color: #b4e5a2; }
.a1-60 { background-color: #45b0e1; }
.a2-60 { background-color: #f1a983; }
.a3-60 { background-color: #47d459; }
.a4-60 { background-color: #61cbf4; }
.a5-60 { background-color: #d86dcd; }
.a6-60 { background-color: #8ed973; }
.a1-full { background-color: #156082; color: #fff; }
.a2-full { background-color: #e97132; color: #fff; }
.a3-full { background-color: #196b24; color: #fff; }
.a4-full { background-color: #0f9ed5; color: #fff; }
.a5-full { background-color: #a02b93; color: #fff; }
.a6-full { background-color: #4ea72e; color: #fff; }
.menu-item {
    display: flex;
    align-items: center;
    gap: 11px;
    height: 37px;
    padding-left: 15px;
    font-size: 14px;
    color: #333;
}
.merge-icon {
    margin-top: -3px;
}
.red-box {
    position: absolute;
    left: 2px;
    top: 573px;
    width: 190px;
    height: 43px;
    border: 5px solid #ed1c24;
}
.grip {
    position: absolute;
    right: 5px;
    bottom: 5px;
}
```
